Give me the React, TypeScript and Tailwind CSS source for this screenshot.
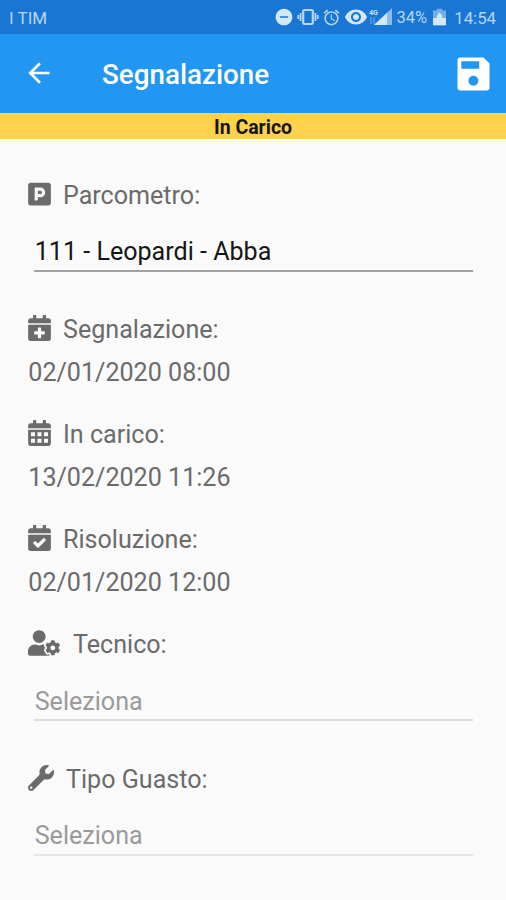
import type { ReactNode } from 'react';
import { FaCalendarCheck, FaCalendarPlus, FaParking, FaUserCog, FaWrench } from 'react-icons/fa';
import { MdAlarm, MdArrowBack, MdDoNotDisturbOn, MdRemoveRedEye } from 'react-icons/md';

function Label({ icon, gap, children }: { icon: ReactNode; gap: string; children: ReactNode }) {
  return (
    <div className={`flex h-[30px] items-center ${gap}`}>
      <span className="mb-[5px]">{icon}</span>
      <span>{children}</span>
    </div>
  );
}

function CalendarGridIcon() {
  return (
    <svg className="h-[26px] w-[23px]" viewBox="0 0 448 512" fill="currentColor">
      <path
        fillRule="evenodd"
        d="M0 464c0 26.500 21.500 48 48 48h352c26.500 0 48-21.500 48-48V192H0zM56 240h80v80H56zM184 240h80v80h-80zM312 240h80v80h-80zM56 370h80v80H56zM184 370h80v80h-80zM312 370h80v80h-80zM400 64h-48V16c0-8.800-7.200-16-16-16h-32c-8.800 0-16 7.200-16 16v48H160V16c0-8.800-7.200-16-16-16h-32c-8.800 0-16 7.200-16 16v48H48C21.500 64 0 85.500 0 112v48h448v-48c0-26.500-21.500-48-48-48z"
      />
    </svg>
  );
}

function StatusBar() {
  return (
    <div className="flex h-[34px] items-center bg-[#1976d2] pl-[9px] pr-[10px] text-[17px] text-[#b5d6f6]">
      <span className="mt-[2px] text-[17px]">I TIM</span>
      <div className="ml-auto flex items-center">
        <MdDoNotDisturbOn className="mr-[3px] size-5 text-[#d3e6fa]" />
        <svg className="mr-[3px] h-[18px] w-[22px]" viewBox="0 0 22 18" fill="none" stroke="currentColor">
          <rect x="6.2" y="2" width="9.6" height="14" rx="1" strokeWidth="2.2" />
          <path d="M3.6 5v8M18.4 5v8M1.3 7v4M20.7 7v4" strokeWidth="1.8" />
        </svg>
        <MdAlarm className="mr-[3px] size-[19px]" />
        <MdRemoveRedEye className="mr-[1px] h-[24px] w-[24px] text-[#d3e6fa]" />
        <svg className="mr-[5px] h-[20px] w-[23px]" viewBox="0 0 23 20">
          <path d="M23 1v17H5z" fill="#8dbcec" />
          <path d="M18 6v12H5z" fill="#d3e6fa" />
          <text x="0" y="8" fontSize="7.5" fontWeight="700" fill="#c5def7" textLength="9" lengthAdjust="spacingAndGlyphs">4G</text>
          <path d="M2 10v7M5 17v-7" stroke="#5b9fe3" strokeWidth="1.4" fill="none" />
        </svg>
        <span className="mt-[1px] text-[16.5px]">34%</span>
        <svg className="ml-[6px] h-[18px] w-[13px]" viewBox="0 0 14 18">
          <path d="M4 0h6v2h4v16H0V2h4z" fill="#73afe9" />
          <path d="M0 10h4v-2l3-4 3 4v2h4v8H0z" fill="#d3e6fa" />
        </svg>
        <span className="ml-[8px] mt-[2px] text-[16.8px]">14:54</span>
      </div>
    </div>
  );
}

function SaveIcon() {
  return (
    <svg className="ml-auto h-[34px] w-[33px]" viewBox="0 0 33 34">
      <path
        fillRule="evenodd"
        fill="currentColor"
        d="M3.5 0.5H26.5L32.5 6.5V30.5a3 3 0 0 1-3 3H3.5a3 3 0 0 1-3-3V3.5a3 3 0 0 1 3-3zM4.3 4.3V11.8H22.2V4.3zM16.4 18.8a5 5 0 1 0 0 10a5 5 0 1 0 0-10z"
      />
    </svg>
  );
}

export default function App() {
  return (
    <div className="h-[900px] w-full overflow-hidden bg-[#fafafa] font-['Roboto',sans-serif] text-[25.1px] leading-[30px] text-[#6b6b6b]">
      <StatusBar />
      <header className="flex h-[79px] items-center bg-[#2196f3] pl-[23px] pr-[16px] text-white">
        <MdArrowBack className="mb-[2px] size-[32px]" />
        <h1 className="ml-[47px] mt-[3px] text-[27.8px] font-medium">Segnalazione</h1>
        <SaveIcon />
      </header>
      <div className="flex h-[26px] items-center justify-center bg-[#ffd24d] text-[19.5px] font-bold text-[#151515]">
        <span className="mt-[4px]">In Carico</span>
      </div>
      <main className="pl-[28px] pr-[33px] pt-[42px]">
        <Label icon={<FaParking className="h-[26px] w-[23px]" />} gap="gap-[12px]">Parcometro:</Label>
        <div className="ml-[6px] mt-[22px] h-[39px] border-b-2 border-[#a2a2a2] pl-[0.7px] pt-[4px] text-[#161616]">111 - Leopardi - Abba</div>
        <div className="mt-[43px]">
          <Label icon={<FaCalendarPlus className="h-[26px] w-[23px]" />} gap="gap-[12px]">Segnalazione:</Label>
          <div className="mt-[13px] pl-[0.3px]">02/01/2020 08:00</div>
        </div>
        <div className="mt-[32px]">
          <Label icon={<CalendarGridIcon />} gap="gap-[12px]">In carico:</Label>
          <div className="mt-[13px] pl-[0.3px]">13/02/2020 11:26</div>
        </div>
        <div className="mt-[32px]">
          <Label icon={<FaCalendarCheck className="h-[26px] w-[23px]" />} gap="gap-[12px]">Risoluzione:</Label>
          <div className="mt-[13px] pl-[0.3px]">02/01/2020 12:00</div>
        </div>
        <div className="mt-[32px]">
          <Label icon={<FaUserCog className="h-[26px] w-[32px]" />} gap="gap-[13px]">Tecnico:</Label>
          <div className="ml-[6px] mt-[22px] h-[39px] border-b-2 border-[#dedede] pl-[0.7px] pt-[5px] text-[#9a9a9a]">Seleziona</div>
        </div>
        <div className="mt-[44px]">
          <Label icon={<FaWrench className="size-[26px]" />} gap="gap-[12px]">Tipo Guasto:</Label>
          <div className="ml-[6px] mt-[22px] h-[39px] border-b-2 border-[#e6e6e6] pl-[0.7px] pt-[4px] text-[#9a9a9a]">Seleziona</div>
        </div>
      </main>
    </div>
  );
}
